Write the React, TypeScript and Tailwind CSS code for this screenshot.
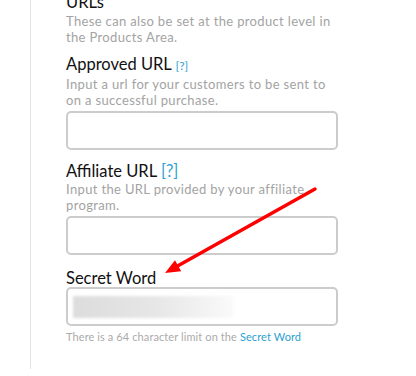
import React from "react";

const font = { fontFamily: "Lato, 'Open Sans', sans-serif" };

function Box({ children }: { children?: React.ReactNode }) {
  return (
    <div className="h-[39px] w-[272px] rounded-[5px] border-2 border-[#cccccc] bg-white flex items-center">
      {children}
    </div>
  );
}

export default function App() {
  return (
    <div className="relative h-[376px] w-[416px] overflow-hidden bg-white" style={font}>
      <div className="ml-[30px] h-full border-l border-[#e3e3e3] pl-[35px] pt-0">
        <div className="-mt-[7px] text-[16.5px] leading-[18px] text-[#111]">URLs</div>
        <div className="mt-[2px] text-[13px] leading-[16px] tracking-[0.35px] text-[#a3a3a3]">
          These can also be set at the product level in
          <br />
          the Products Area.
        </div>

        <div className="mt-[10px] text-[16.5px] leading-[18px] text-[#111]">
          Approved URL <span className="text-[12px] text-[#2d9fd2]">[?]</span>
        </div>
        <div className="mt-[1px] text-[13px] leading-[16px] tracking-[0.35px] text-[#a3a3a3]">
          Input a url for your customers to be sent to
          <br />
          on a successful purchase.
        </div>
        <div className="mt-[3px]">
          <Box />
        </div>

        <div className="mt-[12px] text-[16.5px] leading-[18px] text-[#111]">
          Affiliate URL <span className="text-[#2d9fd2]">[?]</span>
        </div>
        <div className="mt-[1px] text-[13px] leading-[16px] tracking-[0.35px] text-[#a3a3a3]">
          Input the URL provided by your affiliate
          <br />
          program.
        </div>
        <div className="mt-[3px]">
          <Box />
        </div>

        <div className="mt-[14px] text-[16.5px] leading-[18px] text-[#111]">Secret Word</div>
        <div className="mt-0">
          <Box>
            <div className="ml-[5px] h-[22px] w-[160px] bg-gradient-to-r from-[#dcdcdc] via-[#e6e6e6] to-[#fafafa] blur-[1.5px]" />
          </Box>
        </div>
        <div className="mt-[4px] text-[11px] leading-[14px] tracking-[0.1px] text-[#ababab]">
          There is a 64 character limit on the <span className="text-[#2d9fd2]">Secret Word</span>
        </div>
      </div>

      <svg className="pointer-events-none absolute left-0 top-0" width="416" height="376">
        <line x1="315" y1="189" x2="178" y2="265.7" stroke="#ff0000" strokeWidth="3.5" strokeLinecap="round" />
        <polygon points="165,273 181.2,271.2 175,260.3" fill="#ff0000" />
      </svg>
    </div>
  );
}
